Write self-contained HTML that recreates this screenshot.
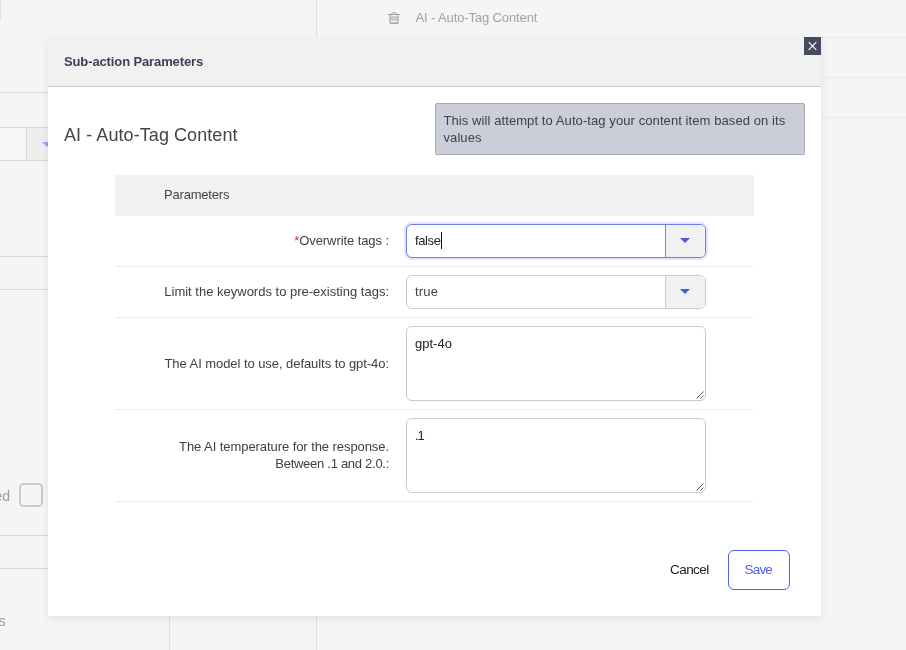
<!DOCTYPE html>
<html lang="en">
<head>
<meta charset="utf-8">
<title>Sub-action Parameters</title>
<style>
*{box-sizing:border-box;margin:0;padding:0}
html,body{width:906px;height:650px;overflow:hidden}
body{background:#f5f5f5;font-family:"Liberation Sans",Arial,sans-serif;font-size:13px;color:#444;position:relative}
#root{position:absolute;left:0;top:0;width:906px;height:650px;overflow:hidden;will-change:transform}
.abs{position:absolute}
.hl{position:absolute;height:1px;background:#d8d8d8}
.vl{position:absolute;width:1px;background:#dddfe4}
.t{position:absolute;white-space:nowrap;line-height:16px}
/* dialog */
#dlg{position:absolute;left:48px;top:37px;width:773px;height:579px;background:#fff;box-shadow:0 3px 8px rgba(0,0,0,.08)}
#dlgh{position:absolute;left:0;top:0;width:773px;height:50px;background:#f1f1f1;border-bottom:1px solid #c8cad6}
#close{position:absolute;left:756px;top:0;width:17px;height:18px;background:#454a5c}
.lbl{position:absolute;right:432px;text-align:right;white-space:nowrap;line-height:17px;color:#404040}
.row{position:absolute;left:67px;width:639px;height:1px;background:#ececec}
.sel{position:absolute;left:358px;width:300px;height:34px;border:1px solid #c6c9d5;border-radius:6px;background:#fff;overflow:hidden}
.sel .btn{position:absolute;right:0;top:0;width:40px;height:32px;background:#f1f1f1;border-left:1px solid #c6c9d6}
.sel .tri{position:absolute;left:14px;top:13px;width:0;height:0;border-left:5px solid transparent;border-right:5px solid transparent;border-top:5.5px solid #4a5be0}
.sel span{position:absolute;left:8px;top:8px;line-height:16px}
.ta{position:absolute;left:358px;width:300px;height:75px;border:1px solid #c6c9d6;border-radius:6px;background:#fff}
.ta span{position:absolute;left:8px;top:9px;line-height:16px;color:#222}
</style>
</head>
<body>
<div id="root">
<!-- background page (faded) -->
<div class="abs" style="left:0;top:0;width:1px;height:21px;background:#e0e2e8"></div>
<div class="vl" style="left:316px;top:0;height:650px"></div>
<div class="vl" style="left:169px;top:600px;height:50px"></div>
<div class="hl" style="left:0;top:92px;width:60px"></div>
<div class="abs" style="left:-10px;top:127px;width:80px;height:34px;border:1px solid #d6d8e0;background:#f7f7f7"></div>
<div class="abs" style="left:26px;top:128px;width:40px;height:32px;border-left:1px solid #d6d8e0;background:#eeeeee"></div>
<div class="abs" style="left:42px;top:142px;width:0;height:0;border-left:5px solid transparent;border-right:5px solid transparent;border-top:5px solid #9aa2ea"></div>
<div class="hl" style="left:0;top:256px;width:60px"></div>
<div class="hl" style="left:0;top:289px;width:60px"></div>
<div class="hl" style="left:0;top:535px;width:60px"></div>
<div class="hl" style="left:0;top:568px;width:60px"></div>
<div class="t" style="right:896px;top:488px;color:#9c9c9c;font-size:14px">ed</div>
<div class="abs" style="left:19px;top:483px;width:24px;height:24px;border:2px solid #c9cbd4;border-radius:4.500px"></div>
<div class="t" style="right:900.400px;top:613px;color:#9c9c9c;font-size:14px">s</div>
<div class="hl" style="left:317px;top:37px;width:589px;background:#ebebeb"></div>
<div class="hl" style="left:317px;top:77px;width:589px;background:#ebebeb"></div>
<div class="hl" style="left:317px;top:117px;width:589px;background:#ebebeb"></div>
<svg class="abs" style="left:387px;top:11px" width="14" height="14" viewBox="0 0 14 14"><path d="M2.100 4h9.800v7.700q0 1.100-1.100 1.100h-7.600q-1.100 0-1.100-1.100z" fill="#bcbcbc"/><rect x="3.600" y="5.500" width="6.800" height="4.500" fill="#cbcbcb"/><rect x="3.700" y="4.100" width="6.600" height="1.100" fill="#f8f8f8"/><rect x="3.700" y="10.100" width="6.600" height="1.100" fill="#f8f8f8"/><g fill="none" stroke="#a0a0a0" stroke-width="1"><path d="M1.200 3.500H12.700M4.400 3.500L5.300 1.700H8.700L9.600 3.500M3.200 12.300H10.800"/></g></svg>
<div class="t" style="left:415.500px;top:10px;color:#a2a2a2;letter-spacing:-.12px">AI - Auto-Tag Content</div>

<!-- dialog -->
<div id="dlg">
  <div id="dlgh">
    <div class="t" style="left:16px;top:17px;font-weight:700;color:#3b3f57;letter-spacing:-.12px">Sub-action Parameters</div>
  </div>
  <div id="close"><svg width="17" height="18" viewBox="0 0 17 18"><path d="M4.700 5.200l7.600 7.600M12.300 5.200l-7.600 7.600" stroke="#fff" stroke-width="1.100" fill="none"/></svg></div>

  <div class="t" style="left:16px;top:86px;font-size:18px;line-height:24px;color:#444;letter-spacing:.07px">AI - Auto-Tag Content</div>

  <div class="abs" style="left:387px;top:66px;width:370px;height:52px;background:#cbced8;border:1px solid #a4a7b5;border-radius:2px"></div>
  <div class="t" style="left:395.500px;top:75px;line-height:17px;white-space:normal;width:354px;color:#404040;letter-spacing:.085px">This will attempt to Auto-tag your content item based on its values</div>

  <div class="abs" style="left:67px;top:138px;width:639px;height:41px;background:#f1f1f1"></div>
  <div class="t" style="left:116px;top:150px;letter-spacing:-.2px">Parameters</div>

  <div class="lbl" style="top:195px;letter-spacing:-.08px"><span style="color:#e02020">*</span>Overwrite tags :</div>
  <div class="sel" style="top:187px;border-color:#6d7ee6;box-shadow:0 0 0 2px #e2e5fb"><span style="color:#222;letter-spacing:-.4px">false</span><i class="abs" style="left:34px;top:7px;width:1px;height:17px;background:#111"></i><div class="btn" style="border-left-color:#6d7ee6"><div class="tri"></div></div></div>
  <div class="row" style="top:229px"></div>

  <div class="lbl" style="top:246px">Limit the keywords to pre-existing tags:</div>
  <div class="sel" style="top:238px"><span style="letter-spacing:.2px">true</span><div class="btn"><div class="tri"></div></div></div>
  <div class="row" style="top:280px"></div>

  <div class="lbl" style="top:318px;letter-spacing:-.06px">The AI model to use, defaults to gpt-4o:</div>
  <div class="ta" style="top:289px"><span>gpt-4o</span><svg class="abs" style="right:1px;bottom:1px" width="8" height="8" viewBox="0 0 8 8"><path d="M0.500 7.500l7-7M4.500 7.500l3-3" stroke="#5a5a5a" stroke-width="1" fill="none"/></svg></div>
  <div class="row" style="top:372px"></div>

  <div class="lbl" style="top:401px;letter-spacing:-.07px">The AI temperature for the response.<br><span style="letter-spacing:-.28px">Between .1 and 2.0.:</span></div>
  <div class="ta" style="top:381px"><span style="letter-spacing:-1px">.1</span><svg class="abs" style="right:1px;bottom:1px" width="8" height="8" viewBox="0 0 8 8"><path d="M0.500 7.500l7-7M4.500 7.500l3-3" stroke="#5a5a5a" stroke-width="1" fill="none"/></svg></div>
  <div class="row" style="top:464px"></div>

  <div class="t" style="left:622px;top:524.500px;color:#222;font-size:13.500px;letter-spacing:-.55px">Cancel</div>
  <div class="abs" style="left:680px;top:513px;width:62px;height:40px;border:1px solid #4f60e2;border-radius:6px;background:#fff"></div>
  <div class="t" style="left:696.500px;top:524.500px;color:#4f60e2;font-size:13.500px;letter-spacing:-.8px">Save</div>
</div>
</div>
</body>
</html>
